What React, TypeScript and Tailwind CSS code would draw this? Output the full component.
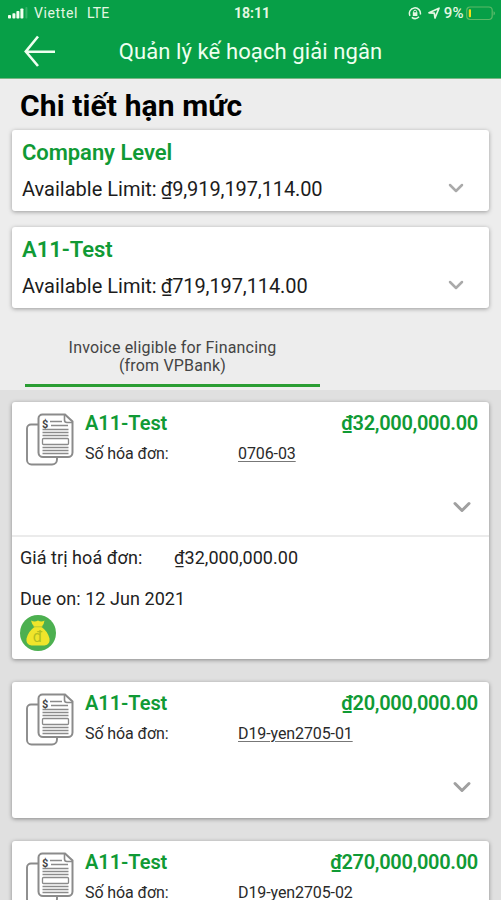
import { ChevronDown } from 'lucide-react';

interface Limit {
  name: string;
  amount: string;
}

interface Invoice {
  company: string;
  amount: string;
  number: string;
  dueOn?: string;
}

const limits: Limit[] = [
  { name: 'Company Level', amount: '₫9,919,197,114.00' },
  { name: 'A11-Test', amount: '₫719,197,114.00' },
];

const invoices: Invoice[] = [
  { company: 'A11-Test', amount: '₫32,000,000.00', number: '0706-03', dueOn: '12 Jun 2021' },
  { company: 'A11-Test', amount: '₫20,000,000.00', number: 'D19-yen2705-01' },
  { company: 'A11-Test', amount: '₫270,000,000.00', number: 'D19-yen2705-02' },
];

const StatusBar = () => (
  <div className="grid h-[26px] grid-cols-3 items-center pl-2 pr-[5px] text-[13px] font-medium text-[#e4f7e2]">
    <div className="flex items-center">
      <svg width="20" height="12" viewBox="0 0 20 12" fill="#f2fff0">
        <rect x="0" y="8" width="3" height="3.5" rx="0.8" />
        <rect x="4.4" y="6.2" width="3" height="5.3" rx="0.8" />
        <rect x="8.4" y="4" width="3" height="7.5" rx="0.8" />
        <rect x="12.4" y="1.5" width="3" height="10" rx="0.8" />
        <rect x="17.4" y="0" width="2" height="11.5" rx="0.8" opacity="0.2" />
      </svg>
      <span className="ml-[6px] text-[14px] font-normal tracking-[0.6px]">Viettel</span>
      <span className="ml-[9px] text-[14px] font-normal tracking-[0.1px]">LTE</span>
    </div>
    <div className="text-center text-[14px] font-bold">18:11</div>
    <div className="flex items-center justify-end">
      <svg width="14" height="14" viewBox="0 0 14 14" fill="none" stroke="#e4f7e2" strokeWidth="1.5">
        <path d="M2 9.8A5.5 5.5 0 1 1 12.3 8.5M3.8 11.3A5.5 5.5 0 0 0 11 10.8" />
        <path d="M5.6 6.8V5.7a1.5 1.5 0 0 1 3 0v1.1" strokeWidth="1" />
        <rect x="4.8" y="6.3" width="4.6" height="3.7" fill="#e4f7e2" stroke="none" />
      </svg>
      <svg className="ml-[6px]" width="12" height="12" viewBox="0 0 12 12" fill="none" stroke="#e4f7e2" strokeWidth="1.7" strokeLinejoin="round">
        <path d="M1 5.8 11 1.2 7 11 6.3 6.2Z" />
      </svg>
      <span className="ml-[4px] text-[15px] tracking-[0.4px]">9%</span>
      <svg className="ml-[2px]" width="30" height="15" viewBox="0 0 30 15" fill="none">
        <rect x="0.7" y="1" width="25.5" height="12.5" rx="3.4" stroke="#5cb968" strokeWidth="1.2" />
        <rect x="2.8" y="3.2" width="2.2" height="8" rx="0.8" fill="#f4df16" />
        <path d="M27.6 5.2c1.6.6 1.6 3.6 0 4.2z" fill="#71c276" />
      </svg>
    </div>
  </div>
);

const Header = () => (
  <header className="h-[79px] shrink-0 border-b border-[#78b682] bg-[#079f47]">
    <StatusBar />
    <div className="relative flex h-[51px] items-center justify-center">
      <svg className="absolute left-6 top-[9px]" width="32" height="32" viewBox="0 0 32 32" fill="none" stroke="#effff0" strokeWidth="2.6">
        <path d="M14 1.5 1.8 16.5 14 31M1.8 16.7H31" />
      </svg>
      <h1 className="text-[22px] leading-none tracking-[0.1px] text-[#effff0]">Quản lý kế hoạch giải ngân</h1>
    </div>
  </header>
);

const LimitCard = ({ name, amount }: Limit) => (
  <div className="h-[81px] rounded-[3px] bg-white pl-[10px] pr-[11px] pt-[9px] shadow-[0_1px_4px_rgba(0,0,0,0.35)]">
    <div className="text-[22px] font-semibold leading-[28px] tracking-[-0.05px] text-[#109a35]">{name}</div>
    <div className="mt-[8px] flex items-center justify-between pr-[10px] text-[20px] leading-[28px] text-[#1c1c1c]">
      <div>
        Available Limit:<span className="ml-[4px] tracking-[-0.1px]">{amount}</span>
      </div>
      <ChevronDown className="-mt-[3px] h-6 w-6 text-[#aaaaaa]" strokeWidth={2.5} />
    </div>
  </div>
);

const InvoiceIcon = () => (
  <svg width="50" height="54" viewBox="0 0 50 54" fill="none" stroke="#8b8b8b">
    <path d="M13 11.5H6a4 4 0 0 0-4 4V47a4.5 4.5 0 0 0 4.5 4.5H27a5 5 0 0 0 5-5V44" strokeWidth="1.9" />
    <path d="M17.5 1.5H40l7.5 7v31a4.5 4.5 0 0 1-4.5 4.5H18a4.5 4.5 0 0 1-4.5-4.5V5.5a4 4 0 0 1 4-4Z" fill="#fff" strokeWidth="2" />
    <path d="M39.5 2V7q0 2.500 2.500 2.500h5.500" strokeWidth="1.6" />
    <text x="17" y="14.5" fontSize="11" fontWeight="700" fill="#444" stroke="none">$</text>
    <path d="M25 8.5h12M26 12.5h17M17.5 16.5h26M17.5 19.5h26M17.5 22.5h26M17.5 34.5h26M17.5 37.5h26M17.5 40.5h26" strokeWidth="1.4" />
    <rect x="17.5" y="25.5" width="26" height="6" rx="1" fill="#fff" strokeWidth="1.3" />
  </svg>
);

const MoneyBag = () => (
  <svg width="36" height="36" viewBox="0 0 36 36">
    <circle cx="18" cy="18" r="18" fill="#4cb050" />
    <path d="M11 5.5q3.5 2 7 0 3.5 2 6.5 0-.5 4.5-3 6.5 6 4 8 11.5 1 6-5 7H11.5q-6-1-5-7 2-7.5 8-11.5-2.500-2-3.500-6.500Z" fill="#f0e52b" />
    <path d="M13.5 11.8h9" stroke="#b8c934" strokeWidth="1" />
    <text x="17.5" y="26.5" textAnchor="middle" fontSize="16" fill="#b3bf22">đ</text>
  </svg>
);

const InvoiceCard = ({ company, amount, number, dueOn }: Invoice) => (
  <div className="shrink-0 rounded-[3px] bg-white shadow-[0_1px_4px_rgba(0,0,0,0.4)]">
    <div className="flex h-[136px] pl-[13px] pr-[11px] pt-[11px]">
      <InvoiceIcon />
      <div className="ml-[10px] flex-1">
        <div className="flex justify-between text-[20px] font-semibold leading-[20px] text-[#109a35]">
          <span className="tracking-[-0.05px]">{company}</span>
          <span className="tracking-[-0.3px]">{amount}</span>
        </div>
        <div className="mt-[10px] flex text-[16px] leading-[22px] tracking-[-0.1px] text-[#2a2a2a]">
          <span className="w-[153px]">Số hóa đơn:</span>
          <span className="underline decoration-[#777] underline-offset-2">{number}</span>
        </div>
        <div className="mt-[28px] flex justify-end pr-[2px]">
          <ChevronDown className="h-7 w-7 text-[#a0a0a0]" strokeWidth={2.6} />
        </div>
      </div>
    </div>
    {dueOn && (
      <div className="-mt-[3px] h-[124px] border-t-2 border-[#ebebeb] px-2 pt-[9px] text-[18px] leading-[24px] tracking-[0.05px] text-[#222]">
        <div className="flex">
          <span className="w-[154px]">Giá trị hoá đơn:</span>
          <span>{amount}</span>
        </div>
        <div className="mt-[17px]">Due on: {dueOn}</div>
        <div className="mt-[4px]">
          <MoneyBag />
        </div>
      </div>
    )}
  </div>
);

const App = () => {
  return (
    <div className="flex h-[900px] w-full flex-col overflow-hidden bg-[#ededed] font-['Roboto','Liberation_Sans',sans-serif]">
      <Header />
      <section className="h-[311px] shrink-0 px-3">
        <h2 className="pl-2 pt-[9px] text-[30px] font-bold leading-[36px] tracking-[0.1px] text-black">Chi tiết hạn mức</h2>
        <div className="mt-[6px] flex flex-col gap-4">
          {limits.map((limit) => (
            <LimitCard key={limit.name} {...limit} />
          ))}
        </div>
        <div className="ml-[13px] mt-[31px] h-[48px] w-[295px] border-b-[3px] border-[#2a9d33] text-center text-[16px] leading-[18px] tracking-[0.18px] text-[#444]">
          Invoice eligible for Financing
          <br />
          (from VPBank)
        </div>
      </section>
      <section className="flex flex-1 flex-col gap-[23px] overflow-hidden bg-[#e0e0e0] px-3 pt-3">
        {invoices.map((invoice) => (
          <InvoiceCard key={invoice.number} {...invoice} />
        ))}
      </section>
    </div>
  );
};

export default App;
